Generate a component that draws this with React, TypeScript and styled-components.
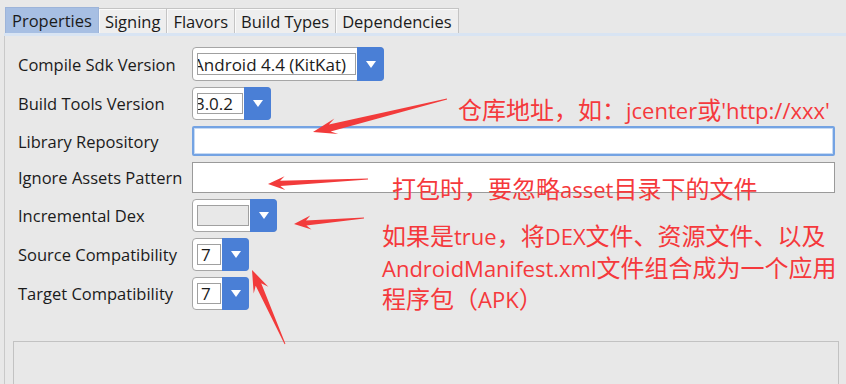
import React from "react";
import styled, { createGlobalStyle } from "styled-components";

const GlobalStyle = createGlobalStyle`
  html, body {
    margin: 0;
    padding: 0;
    background: #e8e8e8;
  }
  body {
    font-family: "Open Sans", "Noto Sans CJK SC", sans-serif;
  }
`;

const Window = styled.div`
  position: relative;
  width: 846px;
  height: 384px;
  overflow: hidden;
  background: #e8e8e8;
  color: #1b1b1b;
`;

const TabBar = styled.div`
  display: flex;
  align-items: flex-end;
  height: 33px;
  padding-left: 5px;
  box-sizing: border-box;
`;

const Tab = styled.div<{ $active?: boolean }>`
  height: ${(p) => (p.$active ? 26 : 25)}px;
  padding: 0 6px;
  box-sizing: border-box;
  display: flex;
  align-items: center;
  font-size: 16.5px;
  border: 1px solid ${(p) => (p.$active ? "#9db4d9" : "#c4c4c4")};
  border-bottom: none;
  border-left-width: ${(p) => (p.$active ? 1 : 0)}px;
  background: ${(p) => (p.$active ? "#a7bfe3" : "#eeeeee")};
  box-shadow: ${(p) => (p.$active ? "none" : "inset 1px 1px 0 #fafafa")};
`;

const TabLine = styled.div`
  height: 3px;
  margin-left: 4px;
  background: #d8e4f3;
`;

const Panel = styled.div`
  margin-left: 4px;
  border-left: 1px solid #c9c9c9;
  height: 100%;
`;

const Form = styled.div`
  display: grid;
  grid-template-columns: 174px 1fr;
  grid-template-rows: 34px 33px 30px 31px 33px 33px 33px;
  row-gap: 6px;
  padding: 11px 11px 0 13px;
  align-items: center;
`;

const Label = styled.div`
  font-size: 16.5px;
  white-space: nowrap;
`;

const Combo = styled.div<{ $w: number }>`
  width: ${(p) => p.$w}px;
  height: 100%;
  box-sizing: border-box;
  display: flex;
  border: 1px solid #a6a6a6;
  border-radius: 4px;
  background: #fff;
`;

const ComboField = styled.div<{ $empty?: boolean }>`
  flex: 1;
  min-width: 0;
  margin: 5px 0 5px 4px;
  border: 1px solid #a0a0a0;
  background: ${(p) => (p.$empty ? "#e8e8e8" : "#fff")};
  display: flex;
  align-items: center;
  justify-content: ${(p) => (p.$empty ? "flex-start" : "flex-end")};
  overflow: hidden;
  white-space: nowrap;
  font-size: 17px;
  padding: 0 9px 0 3px;
`;

const ComboFieldLeft = styled(ComboField)`
  justify-content: flex-start;
  padding: 0 3px;
`;

const ComboButton = styled.div`
  width: 27px;
  margin: -1px -1px -1px 1px;
  border-radius: 0 4px 4px 0;
  background: #4a7fd6;
  display: flex;
  align-items: center;
  justify-content: center;
`;

const Caret = styled.div`
  width: 0;
  height: 0;
  border-left: 5px solid transparent;
  border-right: 5px solid transparent;
  border-top: 7px solid #fff;
`;

const TextField = styled.div<{ $focused?: boolean }>`
  height: 100%;
  box-sizing: border-box;
  background: #fff;
  border: ${(p) => (p.$focused ? "2px solid #74a3e3" : "1px solid #9a9a9a")};
  box-shadow: ${(p) => (p.$focused ? "inset 0 0 0 1px #c6daf4" : "none")};
  border-radius: ${(p) => (p.$focused ? 2 : 0)}px;
`;

const BottomBox = styled.div`
  margin: 31px 7px 0 8px;
  height: 60px;
  border: 1px solid #c2c2c2;
  background: #e8e8e8;
`;

const Overlay = styled.div`
  position: absolute;
  inset: 0;
  pointer-events: none;
`;

const Note = styled.div<{ $x: number; $y: number }>`
  position: absolute;
  left: ${(p) => p.$x}px;
  top: ${(p) => p.$y}px;
  color: #f5393c;
  font-family: "Noto Sans CJK SC", sans-serif;
  font-size: 24px;
  line-height: 29.5px;
  white-space: nowrap;
`;

// latin runs in the notes are set a little narrower than the CJK glyphs
const Latin = styled.span`
  font-family: "Open Sans", sans-serif;
  font-size: 22px;
`;

type ComboProps = { width: number; value?: string; empty?: boolean; left?: boolean };

const ComboBox: React.FC<ComboProps> = ({ width, value, empty, left }) => (
  <Combo $w={width}>
    {left ? (
      <ComboFieldLeft>{value}</ComboFieldLeft>
    ) : (
      <ComboField $empty={empty}>{value}</ComboField>
    )}
    <ComboButton>
      <Caret />
    </ComboButton>
  </Combo>
);

// tapered annotation arrow: thin tail, thick neck, swept-back head
function arrowPoints(x1: number, y1: number, x2: number, y2: number, head = 20, headW = 8, shaftW = 3.2) {
  const len = Math.hypot(x2 - x1, y2 - y1);
  const ux = (x2 - x1) / len;
  const uy = (y2 - y1) / len;
  const nx = -uy;
  const ny = ux;
  const neck = { x: x2 - ux * head * 0.72, y: y2 - uy * head * 0.72 };
  const barb = { x: x2 - ux * head, y: y2 - uy * head };
  const pts = [
    [x1 + nx * 0.4, y1 + ny * 0.4],
    [neck.x + nx * shaftW, neck.y + ny * shaftW],
    [barb.x + nx * headW, barb.y + ny * headW],
    [x2, y2],
    [barb.x - nx * headW, barb.y - ny * headW],
    [neck.x - nx * shaftW, neck.y - ny * shaftW],
    [x1 - nx * 0.4, y1 - ny * 0.4],
  ];
  return pts.map((p) => `${p[0].toFixed(1)},${p[1].toFixed(1)}`).join(" ");
}

const arrows = [
  { x1: 447, y1: 99, x2: 313, y2: 132, head: 24, headW: 8, shaftW: 3.6 },
  { x1: 368, y1: 179, x2: 268, y2: 184, head: 17, headW: 7, shaftW: 2.6 },
  { x1: 364, y1: 218, x2: 294, y2: 224, head: 17, headW: 7, shaftW: 2.6 },
  { x1: 285, y1: 344, x2: 252, y2: 270, head: 22, headW: 8, shaftW: 3 },
];

const App: React.FC = () => {
  return (
    <Window>
      <GlobalStyle />
      <TabBar>
        <Tab $active>Properties</Tab>
        <Tab>Signing</Tab>
        <Tab>Flavors</Tab>
        <Tab>Build Types</Tab>
        <Tab>Dependencies</Tab>
      </TabBar>
      <TabLine />
      <Panel>
        <Form>
          <Label>Compile Sdk Version</Label>
          <ComboBox width={192} value="Android 4.4 (KitKat)" />
          <Label>Build Tools Version</Label>
          <ComboBox width={79} value="3.0.2" />
          <Label>Library Repository</Label>
          <TextField $focused />
          <Label>Ignore Assets Pattern</Label>
          <TextField />
          <Label>Incremental Dex</Label>
          <ComboBox width={85} empty />
          <Label>Source Compatibility</Label>
          <ComboBox width={57} value="7" left />
          <Label>Target Compatibility</Label>
          <ComboBox width={57} value="7" left />
        </Form>
        <BottomBox />
      </Panel>

      <Overlay>
        <svg width="846" height="384">
          {arrows.map((a, i) => (
            <polygon
              key={i}
              points={arrowPoints(a.x1, a.y1, a.x2, a.y2, a.head, a.headW, a.shaftW)}
              fill="#f23b3b"
            />
          ))}
        </svg>
        <Note $x={458} $y={94}>
          仓库地址，如：<Latin>jcenter</Latin>或<Latin>'http://xxx'</Latin>
        </Note>
        <Note $x={392} $y={173}>
          打包时，要忽略<Latin>asset</Latin>目录下的文件
        </Note>
        <Note $x={382} $y={220}>
          如果是<Latin>true</Latin>，将<Latin>DEX</Latin>文件、资源文件、以及
          <br />
          <Latin>AndroidManifest.xml</Latin>文件组合成为一个应用
          <br />
          程序包（<Latin>APK</Latin>）
        </Note>
      </Overlay>
    </Window>
  );
};

export default App;
